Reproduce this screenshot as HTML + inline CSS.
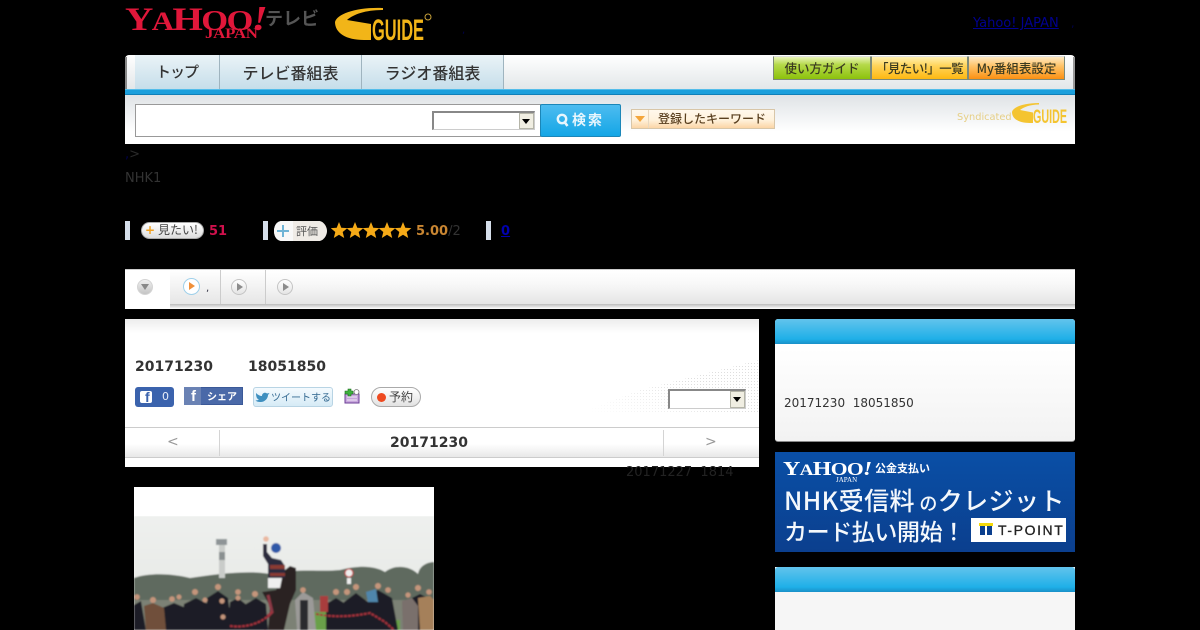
<!DOCTYPE html>
<html lang="ja"><head><meta charset="utf-8"><title>NHK1</title>
<style>
html,body{margin:0;padding:0;background:#000;}
body{width:1200px;height:630px;position:relative;overflow:hidden;font-family:"DejaVu Sans","Noto Sans CJK JP",sans-serif;font-size:13px;color:#333;}
.a{position:absolute;white-space:nowrap;}
.tab{position:absolute;top:55px;height:34px;line-height:34px;text-align:center;font-size:16px;font-weight:500;color:#333;background:linear-gradient(#eaf3f7,#c6deea);border-right:1px solid #9fb4bf;box-sizing:border-box;font-family:"Noto Sans CJK JP",sans-serif;white-space:nowrap;}
.rb{position:absolute;top:56px;height:24px;line-height:22px;text-align:center;font-size:12.5px;font-weight:500;color:#3a3a20;box-sizing:border-box;border:1px solid #7d8a78;border-top-color:#ddd;font-family:"Noto Sans CJK JP",sans-serif;white-space:nowrap;overflow:hidden;}
.sel{position:absolute;background:#fff;border:1px solid #ccc;border-top:2px solid #888;border-left:2px solid #888;box-sizing:border-box;}
.sel i{position:absolute;right:0;top:0;bottom:0;width:15px;background:#f0eee2;border:1px solid #b5b5a8;box-sizing:border-box;}
.sel i:after{content:"";position:absolute;left:2px;top:5px;border:4px solid transparent;border-top:5px solid #000;border-bottom:0;}
.bar{position:absolute;width:5px;background:#d5deea;}
.t2{position:absolute;top:270px;height:34px;border-right:1px solid #ccc;box-sizing:border-box;background:linear-gradient(#fff,#e6e6e6);}
.ci{position:absolute;width:16px;height:16px;border-radius:50%;background:linear-gradient(#fff,#e4e4e4);border:1px solid #c4c4c4;box-sizing:border-box;}
.ci:after{content:"";position:absolute;left:5px;top:3px;border:4px solid transparent;border-left:6px solid #8c8c8c;border-right:0;}
</style></head>
<body>
<!-- Logos -->
<div class="a" style="left:125px;top:1px;font:bold 33px/36px 'Liberation Serif',serif;color:#e0173a;letter-spacing:-1.4px;transform-origin:0 0;transform:scale(1.19,1);">Y<span style="font-size:26px">A</span>H<span style="font-size:29px">OO</span><span style="font-style:italic;font-size:35px">!</span></div>
<div class="a" style="left:205px;top:26px;font:bold 15px/16px 'Liberation Serif',serif;color:#e0173a;letter-spacing:-.2px;transform-origin:0 0;transform:scale(1.12,1);">JAPAN</div>
<div class="a" style="left:265px;top:6px;font:bold 18px/24px 'Noto Sans CJK JP',sans-serif;color:#555;">テレビ</div>
<svg class="a" style="left:334px;top:6px" width="100" height="36" viewBox="0 0 100 36">
<path d="M1 16C3 8 22 1 49 2V4C32 4 20 8 13 14L37 18V34H30C12 34 1 27 1 16Z" fill="#f2b518"/>
<text x="38" y="34" font-family="Liberation Sans" font-weight="bold" font-size="30" fill="#f2b518" textLength="52" lengthAdjust="spacingAndGlyphs">GUIDE</text>
<circle cx="94" cy="11" r="3" fill="none" stroke="#c9a23a" stroke-width="1"/>
</svg>
<div class="a" style="left:462px;top:25px;font-size:10px;color:#00004a;">,</div>
<div class="a" style="left:973px;top:16px;color:#00008f;text-decoration:underline;font-size:13px;line-height:16px;">Yahoo! JAPAN</div>
<div class="a" style="left:1071px;top:17px;color:#00004a;font-size:11px;">,</div>

<!-- Header panel -->
<div class="a" style="left:125px;top:55px;width:950px;height:34px;background:linear-gradient(#fff,#e3e7e9);border-radius:4px 4px 0 0;"></div>
<div class="a" style="left:125px;top:57px;width:2px;height:32px;background:#888;"></div>
<div class="a" style="left:1073px;top:57px;width:2px;height:32px;background:#999;"></div>
<div class="tab" style="left:135px;width:85px;font-size:15px;letter-spacing:-1px;">トップ</div>
<div class="tab" style="left:220px;width:142px;">テレビ番組表</div>
<div class="tab" style="left:362px;width:142px;">ラジオ番組表</div>
<div class="rb" style="left:773px;width:98px;background:linear-gradient(#e8f3b8 0,#b5d94a 35%,#8cc20c);">使い方ガイド</div>
<div class="rb" style="left:871px;width:97px;background:linear-gradient(#fff0b0 0,#ffd45a 40%,#fdb812);letter-spacing:-.6px;">「見たい!」一覧</div>
<div class="rb" style="left:968px;width:97px;background:linear-gradient(#ffe9c2 0,#ffc46a 40%,#fb9012);">My番組表設定</div>
<div class="a" style="left:125px;top:89px;width:950px;height:6px;background:#1b9fdc;border-top:1px solid #54bdea;border-bottom:1px solid #0f7fb8;box-sizing:border-box;"></div>
<div class="a" style="left:125px;top:95px;width:950px;height:49px;background:linear-gradient(#dfe3e6,#fff 75%);"></div>
<div class="a" style="left:135px;top:104px;width:406px;height:33px;background:#fff;border:1px solid #999;box-sizing:border-box;"></div>
<div class="sel" style="left:432px;top:111px;width:103px;height:19px;"><i></i></div>
<div class="a" style="left:540px;top:104px;width:81px;height:33px;box-sizing:border-box;border:1px solid #1b86b8;border-radius:2px;background:linear-gradient(#4dbcf0,#14a6e6);color:#e8f6fd;font:bold 14px/30px 'Noto Sans CJK JP',sans-serif;padding-left:31px;letter-spacing:2px;">検索</div>
<svg class="a" style="left:555px;top:112px" width="16" height="16" viewBox="0 0 16 16"><circle cx="7" cy="7" r="4.200" fill="none" stroke="#e8f6fd" stroke-width="2.400"/><path d="M9.500 10L12.500 14" stroke="#e8f6fd" stroke-width="2.600"/></svg>
<div class="a" style="left:631px;top:109px;width:144px;height:20px;box-sizing:border-box;border:1px solid #d8c6a8;background:linear-gradient(#fff8ec,#fff2dc 55%,#fbd5a6);color:#5a4020;font:500 12px/17px 'Noto Sans CJK JP',sans-serif;padding-left:26px;">登録したキーワード</div>
<div class="a" style="left:635px;top:116px;border:5px solid transparent;border-top:6px solid #f4a63c;border-bottom:0;"></div>
<div class="a" style="left:648px;top:110px;width:1px;height:18px;background:#e8d8c0;"></div>
<div class="a" style="left:957px;top:111px;font-size:9.800px;line-height:13px;color:#e6cf86;">Syndicated</div>
<svg class="a" style="left:1012px;top:102px" width="56" height="23" viewBox="0 0 56 23">
<path d="M0 10C1 5 12 1 27 1V2.500C18 2.500 12 5 8 8L21 10.500V21H18C7 21 0 17 0 10Z" fill="#f4c430"/>
<text x="21" y="21" font-family="Liberation Sans" font-weight="bold" font-size="19" fill="#f4c430" textLength="34" lengthAdjust="spacingAndGlyphs">GUIDE</text>
</svg>

<!-- Breadcrumb & channel -->
<div class="a" style="left:125px;top:147px;font-size:13px;line-height:16px;color:#2a2a2a;"><span style="color:#00004a">,</span>&gt;</div>
<div class="a" style="left:125px;top:171px;font-size:13px;line-height:16px;color:#333;">NHK1</div>

<!-- Status row -->
<div class="bar" style="left:125px;top:221px;height:19px;"></div>
<div class="a" style="left:141px;top:222px;width:63px;height:17px;box-sizing:border-box;border-radius:9px;border:1px solid #aaa;background:linear-gradient(#fff,#ddd);font:12px/14px 'Noto Sans CJK JP',sans-serif;color:#444;padding-left:16px;">見たい!</div>
<div class="a" style="left:145px;top:224px;font:bold 12px/13px 'DejaVu Sans',sans-serif;color:#f0a020;">+</div>
<div class="a" style="left:209px;top:224px;font-weight:bold;font-size:13px;line-height:16px;color:#d0104c;">51</div>
<div class="bar" style="left:263px;top:221px;height:19px;"></div>
<svg class="a" style="left:273px;top:220px" width="56" height="22" viewBox="0 0 56 22"><path d="M9 1H46C50 1 54 6 54 11C54 16 50 21 46 21H9C4 21 1 16 1 11C1 6 4 1 9 1Z" fill="#efebe6"/><path d="M1 11C1 5 4 1 9 1H20V21H9C4 21 1 17 1 11Z" fill="#f8f8f8"/><path d="M10 5V17M4 11H16" stroke="#6fb4d6" stroke-width="2"/></svg>
<div class="a" style="left:296px;top:224px;font:11px/14px 'Noto Sans CJK JP',sans-serif;color:#555;">評価</div>
<svg class="a" style="left:331px;top:222px" width="81" height="17" viewBox="0 0 81 17"><defs><path id="s" d="M8 0L10.300 5.700L16.400 6.100L11.700 10L13.200 16L8 12.700L2.800 16L4.300 10L-.4 6.100L5.700 5.700Z" fill="#f5aa17"/></defs><use href="#s"/><use href="#s" x="16"/><use href="#s" x="32"/><use href="#s" x="48"/><use href="#s" x="64"/></svg>
<div class="a" style="left:416px;top:224px;font-weight:bold;font-size:13px;line-height:16px;color:#c98632;">5.00<span style="font-weight:normal;color:#333">/2</span></div>
<div class="bar" style="left:486px;top:221px;height:19px;"></div>
<div class="a" style="left:501px;top:224px;font-weight:bold;font-size:13px;line-height:16px;color:#0000b0;text-decoration:underline;">0</div>

<!-- Sub tabs -->
<div class="a" style="left:125px;top:269px;width:950px;height:36px;background:linear-gradient(#fff,#f8f8f8 40%,#e4e4e4);border-top:1px solid #ccc;box-sizing:border-box;"></div>
<div class="a" style="left:125px;top:304px;width:950px;height:5px;background:linear-gradient(#bbb,#fff);"></div>
<div class="t2" style="left:170px;width:51px;"></div>
<div class="t2" style="left:221px;width:45px;"></div>
<div class="a" style="left:125px;top:270px;width:45px;height:39px;background:#fff;"></div>
<div class="a" style="left:137px;top:279px;width:16px;height:16px;border-radius:50%;background:linear-gradient(#f0f0f0,#c4c4c4);border:1px solid #d4d4d4;box-sizing:border-box;"></div>
<div class="a" style="left:141px;top:284px;border:4px solid transparent;border-top:6px solid #888;border-bottom:0;"></div>
<div class="a" style="left:183px;top:278px;width:17px;height:17px;border-radius:50%;background:#fff;border:1px solid #9fd0ea;box-sizing:border-box;"></div>
<div class="a" style="left:189px;top:282px;border:4px solid transparent;border-left:6px solid #f0903a;border-right:0;"></div>
<div class="a" style="left:206px;top:284px;font-size:10px;line-height:10px;color:#334;">,</div>
<div class="ci" style="left:231px;top:279px;"></div>
<div class="ci" style="left:277px;top:279px;"></div>

<!-- Main panel -->
<div class="a" style="left:125px;top:319px;width:634px;height:148px;background:linear-gradient(#ececec,#fff 14px);"></div>
<svg class="a" style="left:580px;top:360px" width="179" height="53" viewBox="0 0 179 53"><defs><pattern id="d" width="3" height="3" patternUnits="userSpaceOnUse"><rect width="1" height="1" fill="#dedede"/></pattern><linearGradient id="h" x1="0" y1="1" x2="1" y2=".4"><stop offset=".05" stop-color="#000"/><stop offset=".7" stop-color="#fff"/></linearGradient><mask id="m"><path d="M0 53L60 30L179 0V53Z" fill="url(#h)"/></mask></defs><rect width="179" height="53" fill="url(#d)" mask="url(#m)"/></svg>
<div class="a" style="left:135px;top:358px;font-weight:bold;font-size:14px;line-height:18px;color:#333;">20171230</div>
<div class="a" style="left:248px;top:358px;font-weight:bold;font-size:14px;line-height:18px;color:#333;">18051850</div>

<div class="a" style="left:135px;top:387px;width:39px;height:20px;background:#3b63ad;border-radius:3px;"></div>
<div class="a" style="left:140px;top:391px;width:12px;height:12px;background:#fff;border-radius:2px;"></div>
<div class="a" style="left:145px;top:389px;font:bold 14px/16px 'Liberation Sans',sans-serif;color:#3b63ad;">f</div>
<div class="a" style="left:162px;top:390px;font-size:11px;line-height:14px;color:#e8eef8;">0</div>
<div class="a" style="left:184px;top:387px;width:59px;height:18px;background:#4a69a8;border:1px solid #3b5998;box-sizing:border-box;"></div>
<div class="a" style="left:184px;top:387px;width:17px;height:18px;background:#6a82b4;"></div>
<div class="a" style="left:191px;top:388px;font:bold 15px/17px 'Liberation Sans',sans-serif;color:#fff;">f</div>
<div class="a" style="left:207px;top:389px;font:bold 10px/14px 'Noto Sans CJK JP',sans-serif;color:#fff;">シェア</div>
<div class="a" style="left:253px;top:387px;width:80px;height:20px;box-sizing:border-box;border:1px solid #b8d4e4;border-radius:3px;background:linear-gradient(#f4fafe,#d6ebf6);font:10px/17px 'Noto Sans CJK JP',sans-serif;color:#356a92;padding-left:17px;">ツイートする</div>
<svg class="a" style="left:255px;top:391px" width="15" height="12" viewBox="0 0 15 12"><path d="M1 2C3 4 5 5 7 5C7 2 10 1 12 2.500L14.500 2L13 4C13 8 9 11.500 5 11C3 11 1.500 10.500 0.500 9.500C2 9.500 3 9 4 8.500C2 8 1 6 1 2Z" fill="#3f8fbf"/></svg>
<svg class="a" style="left:344px;top:388px" width="16" height="16" viewBox="0 0 16 16"><rect x="1" y="6" width="14" height="9" fill="#c7a6dc" stroke="#6b3d96"/><path d="M4 1H7V3H9V6H7V8H4V6H1V3H4Z" fill="#3eb03e" stroke="#1d6e1d" stroke-width=".6"/><circle cx="12.500" cy="4" r="2.500" fill="#fff" stroke="#777" stroke-width=".8"/><path d="M3 9H13M3 12H13" stroke="#f3eaf8"/></svg>
<div class="a" style="left:371px;top:387px;width:50px;height:20px;box-sizing:border-box;border:1px solid #aaa;border-radius:10px;background:linear-gradient(#fff,#e2e2e2);font:12px/17px 'Noto Sans CJK JP',sans-serif;color:#444;padding-left:17px;">予約</div>
<div class="a" style="left:377px;top:393px;width:9px;height:9px;border-radius:50%;background:#ee4a20;"></div>
<div class="sel" style="left:668px;top:389px;width:78px;height:20px;"><i></i></div>

<div class="a" style="left:125px;top:427px;width:634px;height:31px;box-sizing:border-box;border-top:1px solid #ccc;border-bottom:1px solid #ccc;background:linear-gradient(#fff 55%,#e8e8e8);"></div>
<div class="a" style="left:219px;top:430px;width:1px;height:26px;background:#d4d4d4;"></div>
<div class="a" style="left:663px;top:430px;width:1px;height:26px;background:#d4d4d4;"></div>
<div class="a" style="left:167px;top:434px;font-size:14px;line-height:16px;color:#999;">&lt;</div>
<div class="a" style="left:390px;top:434px;font-weight:bold;font-size:14px;line-height:18px;color:#333;">20171230</div>
<div class="a" style="left:705px;top:434px;font-size:14px;line-height:16px;color:#999;">&gt;</div>
<div class="a" style="left:626px;top:465px;font-size:13px;line-height:16px;color:#222;">20171227&nbsp;&nbsp;1814</div>

<!-- Photo -->
<svg class="a" style="left:134px;top:487px" width="300" height="143" viewBox="134 487 300 143">
<defs><linearGradient id="sky" x1="0" y1="0" x2="0" y2="1"><stop offset="0" stop-color="#eef0ee"/><stop offset=".6" stop-color="#e8eae7"/><stop offset="1" stop-color="#dfe2dd"/></linearGradient><filter id="bl" x="0" y="0" width="100%" height="100%"><feGaussianBlur stdDeviation=".7"/></filter></defs>
<rect x="134" y="487" width="300" height="143" fill="#fff"/>
<g filter="url(#bl)">
<rect x="134" y="516" width="300" height="114" fill="url(#sky)"/>
<path d="M134 578C150 572 175 574 190 578C215 574 250 570 270 574C300 568 320 572 340 570C360 565 375 566 385 572C395 564 410 566 418 574C420 564 430 562 434 562V625H134Z" fill="#5f6a5f"/>
<rect x="134" y="600" width="300" height="30" fill="#7b8175"/>
<rect x="312" y="612" width="22" height="18" fill="#69a048"/>
<rect x="370" y="620" width="30" height="10" fill="#69a048"/>
<path d="M219 544H225V578H219Z" fill="#c9ccc9"/>
<path d="M216 539H227V545H216Z" fill="#8e9496"/><path d="M219 552H225V560H219Z" fill="#8a9090"/>
<circle cx="349" cy="573" r="4" fill="#eee" stroke="#c33"/><rect x="347" y="578" width="4" height="6" fill="#eee"/>
<!-- horse & jockey -->
<path d="M285 570L290 566L296 568L296 590L290 604L284 630H268L270 606L262 592L276 590Z" fill="#2a2224"/>
<path d="M263 544L263 556L268 564V578H285V566L281 560L272 558L267 552L267 544Z" fill="#2c2a3c"/>
<path d="M270 565H285V569H270ZM270 573H285V576H270Z" fill="#8a3a30"/>
<path d="M268 578H282L280 588H268Z" fill="#eee"/>
<circle cx="276" cy="548" r="5" fill="#2f58a8"/><circle cx="266" cy="539" r="2.800" fill="#eab8a0"/>
<path d="M268 595L272 612L262 622L266 630" stroke="#8c3844" stroke-width="3" fill="none"/>
<!-- people -->
<g fill="#1e1f26">
<path d="M134 605L141 601L146 630H134Z"/>
<path d="M162 608L174 603L186 608L196 630H160Z"/><path d="M184 604L196 598L208 604L212 630H182Z"/><path d="M207 598L218 591L228 598L232 630H206Z"/><path d="M214 610L222 604L234 610L238 630H212Z"/><path d="M230 602L238 598L248 606L252 630H228Z"/><path d="M246 604L256 598L266 604L268 630H244Z"/>
<path d="M326 604L336 598L346 604L348 630H326Z"/><path d="M344 602L356 593L368 602L370 630H342Z"/><path d="M368 596L378 590L392 598L398 630H368Z"/><path d="M412 598L420 594L428 598V630H412Z"/>
</g>
<path d="M144 606L153 603L164 608L166 630H146Z" fill="#70503a"/>
<path d="M295 600L303 592L313 598L316 630H297Z" fill="#9b9a98"/><path d="M300 600H308V630H300Z" fill="#2a2a2e"/>
<path d="M402 601L412 598L418 606V630H403Z" fill="#7a706c"/>
<path d="M418 598L430 596L434 600V630H420Z" fill="#a5805a"/>
<path d="M366 592L376 589L378 602H368Z" fill="#4f86ac"/>
<path d="M320 596H328V612H320Z" fill="#a83c3c"/>
<g fill="#c4957c"><circle cx="137" cy="597" r="2.800"/><circle cx="153" cy="600" r="3"/><circle cx="172" cy="599" r="2.800"/><circle cx="179" cy="597" r="2.500"/><circle cx="195" cy="592" r="3"/><circle cx="205" cy="600" r="2.500"/><circle cx="218" cy="587" r="3"/><circle cx="222" cy="601" r="2.600"/><circle cx="238" cy="592" r="2.800"/><circle cx="238" cy="598" r="2.500"/><circle cx="255" cy="594" r="3"/><circle cx="223" cy="617" r="2.500"/><circle cx="303" cy="590" r="2.800"/><circle cx="336" cy="592" r="3"/><circle cx="347" cy="592" r="3"/><circle cx="356" cy="587" r="3"/><circle cx="378" cy="586" r="3"/><circle cx="388" cy="590" r="2.800"/><circle cx="408" cy="595" r="2.600"/><circle cx="418" cy="588" r="3"/><circle cx="429" cy="592" r="2.800"/></g>
<path d="M230 626C245 628 262 624 272 612M316 614C335 618 355 616 370 613L385 622L394 630" fill="none" stroke="#a4303a" stroke-width="2" stroke-dasharray="3 1"/>
</g>
</svg>

<!-- Sidebar -->
<div class="a" style="left:775px;top:319px;width:300px;height:123px;background:linear-gradient(#fff 30px,#f2f2f2);border-radius:3px;border-bottom:1px solid #888;box-sizing:border-box;"></div>
<div class="a" style="left:775px;top:319px;width:300px;height:25px;background:linear-gradient(#62c4ec,#1fb0e8 80%,#1a90c8);border-radius:3px 3px 0 0;"></div>
<div class="a" style="left:784px;top:395px;font-size:12px;line-height:16px;color:#333;">20171230&nbsp;&nbsp;18051850</div>

<div class="a" style="left:775px;top:452px;width:300px;height:100px;background:linear-gradient(#0a4fa6,#0b3f8e);"></div>
<div class="a" style="left:783px;top:457px;font:bold 20px/24px 'Liberation Serif',serif;color:#fff;letter-spacing:-.6px;transform-origin:0 0;transform:scale(1.2,1);">Y<span style="font-size:16px">A</span>H<span style="font-size:18px">OO</span><i>!</i></div>
<div class="a" style="left:836px;top:476px;font:7px/8px 'Liberation Serif',serif;color:#fff;">JAPAN</div>
<div class="a" style="left:875px;top:460px;font:bold 11px/16px 'Noto Sans CJK JP',sans-serif;color:#fff;">公金支払い</div>
<div class="a" style="left:784px;top:483px;font:500 25px/34px 'Noto Sans CJK JP',sans-serif;color:#f4f8fc;letter-spacing:.4px;">NHK受信料<span style="font-size:18px"> の</span>クレジット</div>
<div class="a" style="left:784px;top:513px;font:500 23px/34px 'Noto Sans CJK JP',sans-serif;color:#f4f8fc;letter-spacing:-.4px;">カード払い開始！</div>
<div class="a" style="left:971px;top:518px;width:95px;height:24px;background:#fff;"></div>
<div class="a" style="left:979px;top:523px;width:14px;height:3px;background:#f5d90a;"></div>
<div class="a" style="left:980px;top:526px;width:5px;height:9px;background:#0b3f8e;"></div>
<div class="a" style="left:987px;top:526px;width:5px;height:9px;background:#0b3f8e;"></div>
<div class="a" style="left:998px;top:522px;font:14px/17px 'Liberation Sans',sans-serif;color:#222;letter-spacing:1.600px;-webkit-text-stroke:.3px #222;">T-POINT</div>

<div class="a" style="left:775px;top:567px;width:300px;height:63px;background:#f6f6f6;"></div>
<div class="a" style="left:775px;top:567px;width:300px;height:25px;background:linear-gradient(#62c4ec,#1fb0e8 80%,#1a90c8);border-radius:3px 3px 0 0;"></div>
</body></html>
